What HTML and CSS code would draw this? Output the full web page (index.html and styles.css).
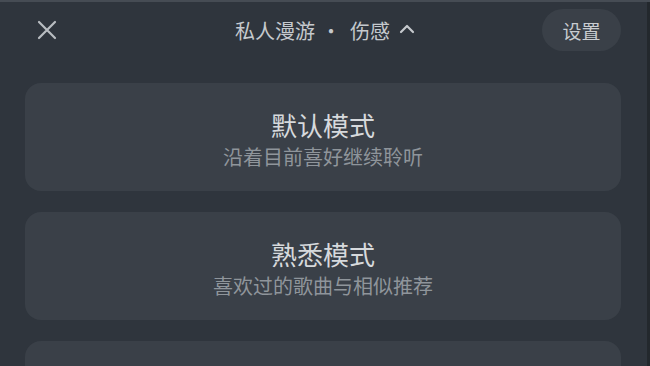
FILE: index.html
```html
<!DOCTYPE html>
<html lang="zh">
<head>
<meta charset="utf-8">
<link rel="stylesheet" href="styles.css">
</head>
<body>
<div class="screen">
  <header class="topbar">
    <button class="close" aria-label="关闭">
      <svg width="22" height="22" viewBox="0 0 22 22"><path d="M3 3 L19 19 M19 3 L3 19" stroke="#b9bdc2" stroke-width="2.2" stroke-linecap="round" fill="none"/></svg>
    </button>
    <div class="title">私人漫游<span class="dot">·</span>伤感<svg class="caret" width="16" height="12" viewBox="0 0 16 12"><path d="M2 9 L8 3 L14 9" stroke="#c5c9cd" stroke-width="2.2" stroke-linecap="round" stroke-linejoin="round" fill="none"/></svg></div>
    <button class="settings">设置</button>
  </header>
  <main class="modes">
    <div class="card">
      <div class="card-title">默认模式</div>
      <div class="card-sub">沿着目前喜好继续聆听</div>
    </div>
    <div class="card">
      <div class="card-title">熟悉模式</div>
      <div class="card-sub">喜欢过的歌曲与相似推荐</div>
    </div>
    <div class="card"></div>
  </main>
</div>
</body>
</html>
```
FILE: styles.css
```css
html, body {
  margin: 0;
  padding: 0;
  height: 100%;
  overflow: hidden;
}
body {
  background: #2f353d;
  font-family: "Noto Sans CJK SC", "Noto Sans", sans-serif;
}
.screen {
  height: 366px;
  overflow: hidden;
  box-sizing: border-box;
  border-top: 2px solid #464c54;
  box-shadow: inset -3px 0 0 #23282d;
}
.topbar {
  height: 56px;
  display: flex;
  align-items: center;
  justify-content: space-between;
  padding: 0 29px 0 36px;
  position: relative;
}
.close {
  background: none;
  border: 0;
  padding: 0;
  width: 22px;
  height: 22px;
  display: flex;
}
.title {
  position: absolute;
  left: 0;
  right: 0;
  color: #c5c9cd;
  font-size: 20px;
  display: flex;
  justify-content: center;
  align-items: center;
  pointer-events: none;
}
.dot {
  margin: 0 9px 0 6px;
}
.caret {
  margin-left: 9px;
  margin-top: -2px;
}
.settings {
  background: #3a4048;
  border: 0;
  border-radius: 21px;
  width: 79px;
  height: 42px;
  color: #c8ccd0;
  font-family: inherit;
  font-size: 19px;
}
.modes {
  display: flex;
  flex-direction: column;
  gap: 21px;
  padding: 25px 29px 0 25px;
}
.card {
  height: 108px;
  flex: none;
  box-sizing: border-box;
  padding-top: 26px;
  background: #3a4048;
  border-radius: 16px;
  display: flex;
  flex-direction: column;
  align-items: center;
}
.card-title {
  color: #d6d9dc;
  font-size: 26px;
  font-weight: 400;
  line-height: 32px;
}
.card-sub {
  margin-top: 2px;
  color: #8f959b;
  font-size: 20px;
  line-height: 28px;
}
```
